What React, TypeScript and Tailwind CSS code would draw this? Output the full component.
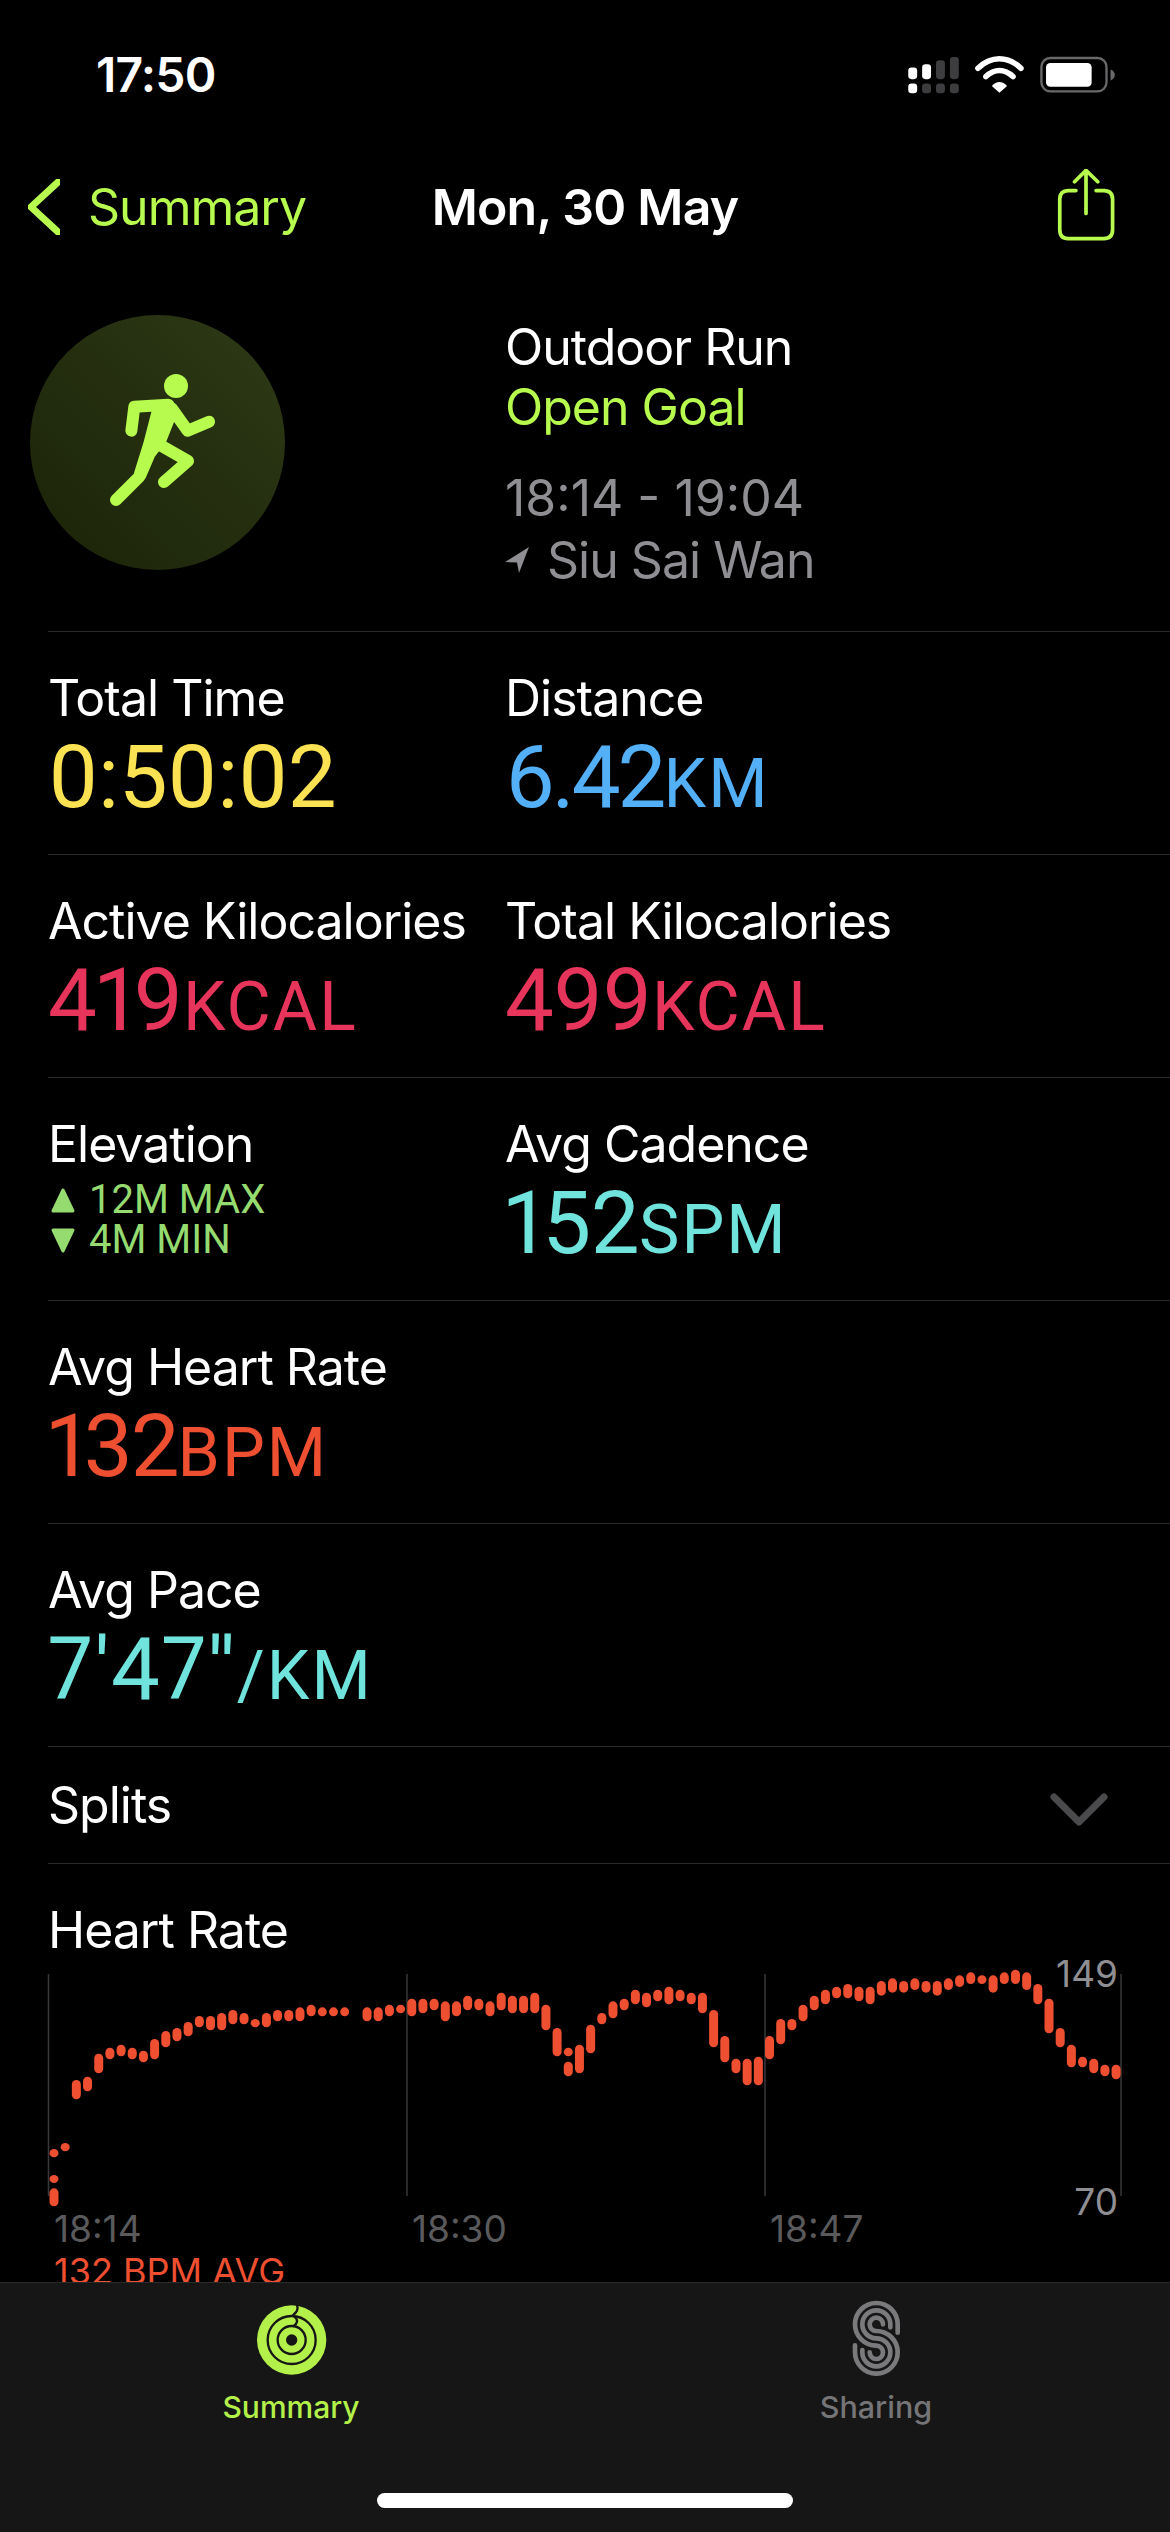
import React from "react";

const G = "#b6fb4e";

const bars: [number, number, number][] = [
  [0, 750, 775], [0, 828, 852], [0, 868, 922], [1, 732, 757], [2, 543, 601], [3, 533, 577], [4, 464, 523], [5, 446, 481],
  [6, 437, 472], [7, 446, 481], [8, 455, 490], [9, 420, 481], [10, 396, 445], [11, 387, 427], [12, 369, 412], [13, 351, 385],
  [14, 351, 394], [15, 342, 394], [16, 333, 376], [17, 342, 376], [18, 360, 385], [19, 342, 385], [20, 333, 367], [21, 333, 367],
  [22, 325, 367], [23, 317, 352], [24, 325, 352], [25, 325, 352], [26, 325, 352], [28, 325, 367], [29, 325, 367], [30, 317, 352],
  [31, 317, 343], [32, 299, 352], [33, 299, 343], [34, 299, 334], [35, 307, 367], [36, 307, 352], [37, 290, 334], [38, 299, 334],
  [39, 307, 352], [40, 281, 334], [41, 290, 343], [42, 290, 343], [43, 281, 343], [44, 317, 394], [45, 387, 472], [46, 446, 472],
  [46, 488, 532], [47, 437, 523], [48, 377, 463], [49, 342, 376], [50, 307, 358], [51, 299, 334], [52, 272, 316], [53, 281, 325],
  [54, 272, 307], [55, 263, 316], [56, 272, 307], [57, 281, 316], [58, 281, 343], [59, 333, 445], [60, 411, 490], [61, 479, 523],
  [62, 479, 559], [63, 473, 559], [64, 411, 481], [65, 360, 436], [66, 360, 394], [67, 317, 367], [68, 290, 334], [69, 272, 316],
  [70, 263, 298], [71, 255, 298], [72, 263, 307], [73, 263, 316], [74, 246, 290], [75, 238, 281], [76, 246, 281], [77, 238, 273],
  [78, 246, 281], [79, 246, 290], [80, 238, 273], [81, 229, 264], [82, 220, 255], [83, 229, 255], [84, 229, 281], [85, 220, 255],
  [86, 212, 255], [87, 220, 273], [88, 255, 316], [89, 299, 403], [90, 387, 445], [91, 437, 505], [92, 473, 505], [93, 479, 523],
  [94, 497, 532], [95, 497, 541],
];

function StatusIcons() {
  return (
    <svg width="210" height="38" viewBox="80 75 630 115" fill="none">
      <rect x="81" y="110" width="27" height="35" rx="10" fill="#fff" />
      <rect x="123" y="100" width="27" height="45" rx="10" fill="#fff" />
      <rect x="165" y="88" width="27" height="57" rx="10" fill="#3d3d3f" />
      <rect x="207" y="78" width="27" height="67" rx="10" fill="#3d3d3f" />
      <rect x="81" y="158" width="27" height="30" rx="10" fill="#fff" />
      <rect x="123" y="158" width="27" height="30" rx="10" fill="#3d3d3f" />
      <rect x="165" y="158" width="27" height="30" rx="10" fill="#3d3d3f" />
      <rect x="207" y="158" width="27" height="30" rx="10" fill="#3d3d3f" />
      <path d="M292 112 C332 74 382 74 422 112" stroke="#fff" strokeWidth="17" strokeLinecap="round" />
      <path d="M316 137 C342 113 372 113 398 137" stroke="#fff" strokeWidth="17" strokeLinecap="round" />
      <path d="M334 166 C348 150 366 150 380 166 L357 186 Z" fill="#fff" />
      <rect x="484" y="81" width="197" height="101" rx="27" stroke="#69696b" strokeWidth="7" />
      <rect x="498" y="96" width="138" height="72" rx="13" fill="#fff" />
      <path d="M693 116 C703 120 706 126 706 132 C706 139 703 145 693 149 Z" fill="#69696b" />
    </svg>
  );
}

function Runner() {
  return (
    <svg width="254" height="254" viewBox="30 45 762 762" fill="none" stroke={G} strokeLinecap="round" strokeLinejoin="round">
      <circle cx="468" cy="258" r="36" fill={G} stroke="none" />
      <path d="M334 392 L343 320 L445 314" strokeWidth="36" />
      <path d="M455 325 L503 392 L567 365" strokeWidth="36" />
      <path d="M420 435 L504 483 L432 546" strokeWidth="36" />
      <path d="M288 600 L358 530" strokeWidth="36" />
      <path d="M405 325 L450 320 L462 345 L430 425 L398 465 L370 530 L350 520 L378 430 Z" fill={G} strokeWidth="16" />
    </svg>
  );
}

function Value({ n, u, c, t = "tracking-[-0.5px]" }: { n: string; u?: string; c: string; t?: string }) {
  return (
    <div className={`font-['Roboto',sans-serif] proportional-nums ${c} mt-[7px] h-[84px] leading-[84px] text-[87px] whitespace-nowrap`}>
      <span className={t}>{n}</span>
      {u && <span className="text-[68px] tracking-[2px]">{u}</span>}
    </div>
  );
}

function Label({ children }: { children: React.ReactNode }) {
  return <div className="text-white text-[50px] leading-[60px] tracking-[-1px] whitespace-nowrap">{children}</div>;
}

function Row({ children }: { children: React.ReactNode }) {
  return <div className="ml-[48px] h-[223px] border-t border-[#2a2a2c] pt-[36px] flex">{children}</div>;
}

function Col({ children }: { children: React.ReactNode }) {
  return <div className="w-[457px] shrink-0">{children}</div>;
}

function RingsIcon() {
  return (
    <svg width="100" height="100" viewBox="0 0 300 300" fill="none">
      <circle cx="152" cy="150" r="104" fill="#b4f04a" />
      <circle cx="152" cy="150" r="17" fill="#161616" />
      <circle cx="152" cy="150" r="42" stroke="#161616" strokeWidth="7" />
      <circle cx="152" cy="150" r="72" stroke="#161616" strokeWidth="7" />
      <path d="M168 45 C174 60 164 68 156 76 M160 80 C174 90 168 102 158 108" stroke="#161616" strokeWidth="7" strokeLinecap="round" />
    </svg>
  );
}

function SharingIcon() {
  return (
    <svg width="100" height="100" viewBox="0 0 300 300" fill="none" stroke="#7a7a7c" strokeWidth="14" strokeLinecap="round">
      <path d="M215 128 V103 A64 64 0 0 0 87 103 A64 64 0 0 0 151 167 A20 20 0 0 1 171 187 A20 20 0 0 1 131 187" />
      <path d="M193 112 V103 A42 42 0 0 0 109 103 A42 42 0 0 0 151 145 A42 42 0 0 1 193 187 A42 42 0 0 1 109 187 V180" />
      <path d="M171 103 A20 20 0 0 0 131 103 A20 20 0 0 0 151 123 A64 64 0 0 1 215 187 A64 64 0 0 1 87 187 V166" />
    </svg>
  );
}

export default function App() {
  return (
    <div className="w-[1170px] h-[2532px] bg-black flex flex-col overflow-hidden font-['Inter',sans-serif] text-white">
      {/* status bar */}
      <div className="h-[149px] shrink-0 flex items-center justify-between pl-[96px] pr-[53px]">
        <span className="text-[48px] font-semibold tracking-[-0.8px]">17:50</span>
        <StatusIcons />
      </div>

      {/* nav */}
      <div className="h-[116px] shrink-0 relative flex items-center justify-center">
        <div className="absolute left-[28px] top-[30px] flex items-center gap-[28px]">
          <svg width="32" height="56" viewBox="0 0 32 56" fill="none" stroke={G} strokeWidth="7" strokeLinecap="round" strokeLinejoin="round">
            <path d="M30 3 L3 28 L30 53" />
          </svg>
          <span className="text-[50px] tracking-[-1px] leading-[56px] text-[#b6fb4e]">Summary</span>
        </div>
        <span className="text-[50px] font-semibold tracking-[-0.8px]">Mon, 30 May</span>
        <svg className="absolute left-[1056px] top-[20px]" width="60" height="72" viewBox="530 420 170 214" fill="none" stroke={G} strokeWidth="11" strokeLinecap="round" strokeLinejoin="round">
          <path d="M585 484 H562 Q537 484 537 510 V600 Q537 627 562 627 H668 Q694 627 694 600 V510 Q694 484 668 484 H645" />
          <path d="M615 552 V424 M581 458 L615 424 L650 458" />
        </svg>
      </div>

      {/* scrolling content */}
      <div className="flex-1 min-h-0 overflow-hidden">
        <div className="h-[366px] flex pl-[30px] pt-[50px]">
          <div className="w-[255px] h-[255px] rounded-full bg-linear-to-tr from-[#1b2308] to-[#2e3a17]">
            <Runner />
          </div>
          <div className="ml-[220px] pt-[2px] text-[50px] leading-[60px] tracking-[-1px] whitespace-nowrap">
            <div>Outdoor Run</div>
            <div className="text-[#b6fb4e]">Open Goal</div>
            <div className="text-[#8e8e93] mt-[31px] tracking-[0px]">18:14 - 19:04</div>
            <div className="text-[#8e8e93] mt-[2px] flex items-center gap-[18px]">
              <svg width="24" height="26" viewBox="0 0 24 26" fill="#8e8e93">
                <path d="M24 0 L0 15 L12 15.5 L14 26 Z" />
              </svg>
              <span>Siu Sai Wan</span>
            </div>
          </div>
        </div>

        <Row>
          <Col>
            <Label>Total Time</Label>
            <Value n="0:50:02" c="text-[#fbe252]" />
          </Col>
          <Col>
            <Label>Distance</Label>
            <Value n="6.42" u="KM" c="text-[#54b0f6]" t="tracking-[-3px]" />
          </Col>
        </Row>
        <Row>
          <Col>
            <Label>Active Kilocalories</Label>
            <Value n="419" u="KCAL" c="text-[#e6345a]" />
          </Col>
          <Col>
            <Label>Total Kilocalories</Label>
            <Value n="499" u="KCAL" c="text-[#e6345a]" />
          </Col>
        </Row>
        <Row>
          <Col>
            <Label>Elevation</Label>
            <div className="font-['Roboto',sans-serif] text-[#95db70] text-[40px] leading-[40px] mt-[6px]">
              <div className="flex items-center gap-[14px] ml-[3px]">
                <svg width="24" height="25" viewBox="0 0 24 25" fill="#95db70" stroke="#95db70" strokeWidth="3" strokeLinejoin="round">
                  <path d="M12 2 L22 23 H2 Z" />
                </svg>
                <span>12M MAX</span>
              </div>
              <div className="flex items-center gap-[14px] ml-[3px]">
                <svg width="24" height="25" viewBox="0 0 24 25" fill="#95db70" stroke="#95db70" strokeWidth="3" strokeLinejoin="round">
                  <path d="M2 2 H22 L12 23 Z" />
                </svg>
                <span>4M MIN</span>
              </div>
            </div>
          </Col>
          <Col>
            <Label>Avg Cadence</Label>
            <Value n="152" u="SPM" c="text-[#6fe3dc]" />
          </Col>
        </Row>
        <Row>
          <Col>
            <Label>Avg Heart Rate</Label>
            <Value n="132" u="BPM" c="text-[#ee4f30]" t="tracking-[-2px]" />
          </Col>
        </Row>
        <Row>
          <Col>
            <Label>Avg Pace</Label>
            <Value n={"7'47''"} u="/KM" c="text-[#6fe3dc]" t="tracking-[1.5px]" />
          </Col>
        </Row>
        <div className="ml-[48px] h-[117px] border-t border-[#2a2a2c] flex items-center justify-between pr-[62px]">
          <Label>Splits</Label>
          <svg className="mt-[10px]" width="58" height="34" viewBox="0 0 58 34" fill="none" stroke="#4a4a4c" strokeWidth="7" strokeLinecap="round" strokeLinejoin="round">
            <path d="M4 4 L29 29 L54 4" />
          </svg>
        </div>

        <div className="border-t border-[#2a2a2c] ml-[48px] pt-[36px]">
          <Label>Heart Rate</Label>
        </div>
        <div className="relative mt-[4px] h-[245px]">
          <svg width="1170" height="245" viewBox="0 1965 1170 245">
            {[48.5, 407, 765, 1121].map((x) => (
              <line key={x} x1={x} x2={x} y1="1975" y2="2197" stroke="#38383a" strokeWidth="1.5" />
            ))}
            {bars.map(([i, a, b], k) => (
              <rect key={k} x={54 + 11.18 * i - 4.5} y={1900 + a / 3} width="9" height={(b - a) / 3} rx="4.5" fill="#ee4f30" />
            ))}
          </svg>
          <span className="absolute right-[52px] top-[-10px] text-[37px] leading-[40px] text-[#8e8e93]">149</span>
          <span className="absolute right-[52px] top-[218px] text-[37px] leading-[40px] text-[#8e8e93]">70</span>
        </div>
        <div className="flex pl-[54px] text-[37px] leading-[40px] text-[#5a5a5c]">
          <span className="w-[358px]">18:14</span>
          <span className="w-[358px]">18:30</span>
          <span>18:47</span>
        </div>
        <div className="pl-[54px] mt-[2px] text-[36px] leading-[40px] text-[#ee4f30]">132 BPM AVG</div>
      </div>

      {/* tab bar */}
      <div className="h-[250px] shrink-0 bg-[#161616] border-t border-[#2a2a2a] flex flex-col">
        <div className="flex h-[207px]">
          <div className="w-[582px] flex flex-col items-center pt-[7px]">
            <RingsIcon />
            <span className="text-[30px] font-medium leading-[36px] text-[#b4f04a] mt-[-1px]">Summary</span>
          </div>
          <div className="w-[588px] flex flex-col items-center pt-[7px]">
            <SharingIcon />
            <span className="text-[30.5px] font-medium leading-[36px] text-[#757577] mt-[-1px]">Sharing</span>
          </div>
        </div>
        <div className="w-[416px] h-[15px] rounded-full bg-white self-center mt-[3px]" />
      </div>
    </div>
  );
}
